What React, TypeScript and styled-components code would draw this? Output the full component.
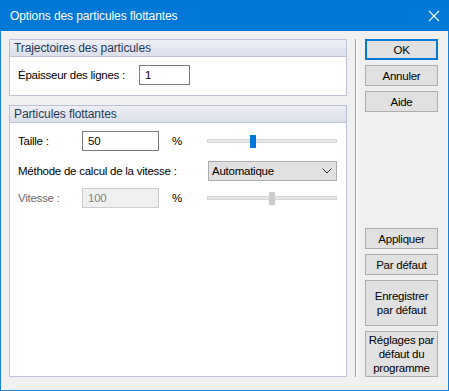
import React from 'react';
import styled, { createGlobalStyle } from 'styled-components';

const GlobalStyle = createGlobalStyle`
  html, body {
    margin: 0;
    padding: 0;
    background: #f0f0f0;
  }
  body {
    font-family: "Segoe UI", "Liberation Sans", Arial, sans-serif;
    font-size: 11.5px;
    letter-spacing: -0.25px;
    color: #000;
  }
`;

const Window = styled.div`
  width: 449px;
  height: 391px;
  box-sizing: border-box;
  border: 1px solid #1883d7;
  border-top: 0;
  background: #f0f0f0;
  display: flex;
  flex-direction: column;
`;

const TitleBar = styled.div`
  height: 31px;
  flex: none;
  background: #0078d7;
  color: #fff;
  display: flex;
  align-items: center;
  justify-content: space-between;
  padding: 0 9px 0 10px;
  margin: 0 -1px;
  font-size: 12px;
  letter-spacing: -0.1px;
`;

const Body = styled.div`
  flex: 1;
  display: flex;
  padding: 8px 10px 13px 8px;
  min-height: 0;
`;

const LeftCol = styled.div`
  width: 338px;
  display: flex;
  flex-direction: column;
  gap: 9px;
`;

const Separator = styled.div`
  width: 1px;
  margin: 0 8px 0 8px;
  background: #a0a0a0;
  border-right: 1px solid #fff;
`;

const RightCol = styled.div`
  width: 73px;
  display: flex;
  flex-direction: column;
  justify-content: space-between;
`;

const BtnStack = styled.div`
  display: flex;
  flex-direction: column;
  gap: 5px;
`;

const Button = styled.div<{ primary?: boolean; tall?: boolean }>`
  height: ${({ tall }) => (tall ? '46px' : '21px')};
  box-sizing: border-box;
  background: #e1e1e1;
  border: ${({ primary }) => (primary ? '2px solid #0078d7' : '1px solid #adadad')};
  display: flex;
  align-items: center;
  justify-content: center;
  text-align: center;
  line-height: 14px;
  white-space: nowrap;
`;

const Group = styled.div<{ grow?: boolean }>`
  border: 1px solid #bcc1d3;
  background: #fff;
  flex: ${({ grow }) => (grow ? 1 : 'none')};
  display: flex;
  flex-direction: column;
`;

const GroupHeader = styled.div`
  height: 16px;
  background: linear-gradient(#eeeff5, #dcdfea);
  border-bottom: 1px solid #bcc1d3;
  color: #1e395b;
  padding-left: 4px;
  line-height: 16px;
  font-size: 12px;
  letter-spacing: -0.1px;
`;

const GroupBody = styled.div`
  padding: 8px 9px 10px 8px;
  display: flex;
  flex-direction: column;
`;

const Row = styled.div<{ gap?: number }>`
  display: flex;
  align-items: center;
  height: 20px;
  margin-bottom: ${({ gap }) => gap ?? 0}px;
`;

const Label = styled.span<{ w?: number; disabled?: boolean }>`
  width: ${({ w }) => (w ? `${w}px` : 'auto')};
  flex: ${({ w }) => (w ? 'none' : 1)};
  color: ${({ disabled }) => (disabled ? '#6d6d6d' : '#000')};
  white-space: nowrap;
`;

const TextBox = styled.div<{ w: number; disabled?: boolean }>`
  width: ${({ w }) => w}px;
  height: 20px;
  box-sizing: border-box;
  border: 1px solid ${({ disabled }) => (disabled ? '#cccccc' : '#7a7a7a')};
  background: ${({ disabled }) => (disabled ? '#f0f0f0' : '#fff')};
  color: ${({ disabled }) => (disabled ? '#838383' : '#000')};
  padding-left: 5px;
  display: flex;
  align-items: center;
`;

const Pct = styled.span<{ disabled?: boolean }>`
  width: 48px;
  padding-left: 13px;
  box-sizing: border-box;
  color: ${({ disabled }) => (disabled ? '#6d6d6d' : '#000')};
`;

const Slider = styled.div`
  flex: 1;
  height: 13px;
  position: relative;
  display: flex;
  align-items: center;
`;

const Track = styled.div`
  width: 100%;
  height: 4px;
  box-sizing: border-box;
  background: #e7e7e7;
  border: 1px solid #d6d6d6;
`;

const Thumb = styled.div<{ disabled?: boolean }>`
  position: absolute;
  top: 0;
  width: 6px;
  height: 13px;
  background: ${({ disabled }) => (disabled ? '#cccccc' : '#0078d7')};
`;

const Select = styled.div`
  width: 129px;
  height: 20px;
  box-sizing: border-box;
  background: #e1e1e1;
  border: 1px solid #adadad;
  display: flex;
  align-items: center;
  justify-content: space-between;
  padding: 0 4px 0 3px;
`;

const App = () => {
  return (
    <>
      <GlobalStyle />
      <Window>
        <TitleBar>
          <span>Options des particules flottantes</span>
          <svg width="12" height="12" viewBox="0 0 12 12">
            <path d="M1 1 L11 11 M11 1 L1 11" stroke="#fff" strokeWidth="1.1" />
          </svg>
        </TitleBar>
        <Body>
          <LeftCol>
            <Group>
              <GroupHeader>Trajectoires des particules</GroupHeader>
              <GroupBody>
                <Row>
                  <Label w={121}>Épaisseur des lignes :</Label>
                  <TextBox w={51}>1</TextBox>
                </Row>
              </GroupBody>
            </Group>
            <Group grow>
              <GroupHeader>Particules flottantes</GroupHeader>
              <GroupBody>
                <Row gap={10}>
                  <Label w={64}>Taille :</Label>
                  <TextBox w={77}>50</TextBox>
                  <Pct>%</Pct>
                  <Slider>
                    <Track />
                    <Thumb style={{ left: 43 }} />
                  </Slider>
                </Row>
                <Row gap={7}>
                  <Label>Méthode de calcul de la vitesse :</Label>
                  <Select>
                    <span>Automatique</span>
                    <svg width="10" height="6" viewBox="0 0 10 6">
                      <path d="M0.5 0.5 L5 5 L9.5 0.5" fill="none" stroke="#333" strokeWidth="1" />
                    </svg>
                  </Select>
                </Row>
                <Row>
                  <Label w={64} disabled>Vitesse :</Label>
                  <TextBox w={77} disabled>100</TextBox>
                  <Pct>%</Pct>
                  <Slider>
                    <Track />
                    <Thumb disabled style={{ left: 62 }} />
                  </Slider>
                </Row>
              </GroupBody>
            </Group>
          </LeftCol>
          <Separator />
          <RightCol>
            <BtnStack>
              <Button primary>OK</Button>
              <Button>Annuler</Button>
              <Button>Aide</Button>
            </BtnStack>
            <BtnStack>
              <Button>Appliquer</Button>
              <Button>Par défaut</Button>
              <Button tall>Enregistrer<br />par défaut</Button>
              <Button tall>Réglages par<br />défaut du<br />programme</Button>
            </BtnStack>
          </RightCol>
        </Body>
      </Window>
    </>
  );
};

export default App;
